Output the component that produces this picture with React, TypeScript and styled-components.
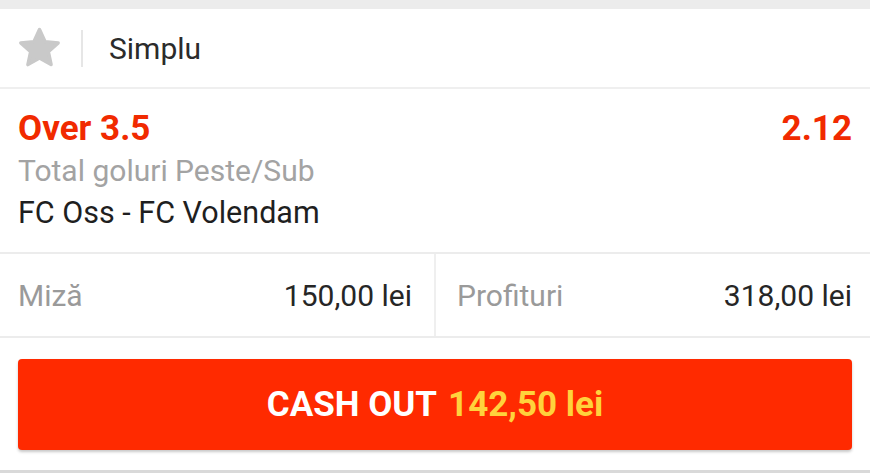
import React from "react";
import styled, { createGlobalStyle } from "styled-components";

const Global = createGlobalStyle`
  html, body { margin: 0; padding: 0; background: #ffffff; }
  body { font-family: Roboto, "Liberation Sans", Arial, sans-serif; -webkit-font-smoothing: antialiased; }
`;

const Page = styled.div`
  width: 870px;
  height: 473px;
  display: flex;
  flex-direction: column;
  background: #ffffff;
  overflow: hidden;
`;

const Band = styled.div<{ $h: number; $c: string }>`
  height: ${(p) => p.$h}px;
  background: ${(p) => p.$c};
  flex: none;
`;

const Header = styled.div`
  height: 78px;
  display: flex;
  align-items: center;
  padding-left: 18px;
  flex: none;
`;

const StarIcon = styled.svg`
  width: 43px;
  height: 43px;
  flex: none;
`;

const VDivider = styled.div`
  width: 2px;
  height: 37px;
  background: #e6e6e6;
  margin: 0 26px 0 20px;
`;

const HeaderTitle = styled.span`
  font-size: 30px;
  color: #2b2b2b;
`;

const Selection = styled.div`
  padding: 19px 18px 20px;
  display: flex;
  flex-direction: column;
  flex: none;
`;

const Line = styled.div<{ $h: number }>`
  height: ${(p) => p.$h}px;
  display: flex;
  align-items: center;
  justify-content: space-between;
`;

const Pick = styled.span`
  font-size: 35px;
  font-weight: 700;
  color: #f12a00;
`;

const Odds = styled.span`
  font-size: 35px;
  font-weight: 700;
  color: #f12a00;
`;

const Market = styled.span`
  font-size: 30px;
  color: #a3a3a3;
`;

const Event = styled.span`
  font-size: 30.5px;
  color: #1f1f1f;
`;

const StakeRow = styled.div`
  height: 82px;
  display: grid;
  grid-template-columns: 434px 2px 1fr;
  flex: none;
`;

const StakeCell = styled.div<{ $pl: number; $pr: number }>`
  display: flex;
  align-items: center;
  justify-content: space-between;
  padding: 0 ${(p) => p.$pr}px 0 ${(p) => p.$pl}px;
`;

const CellDivider = styled.div`
  background: #efefef;
`;

const Label = styled.span`
  font-size: 30px;
  color: #9a9a9a;
`;

const Value = styled.span`
  font-size: 30px;
  color: #262626;
`;

const ButtonWrap = styled.div`
  padding: 21px 18px 20px;
  flex: none;
`;

const CashOut = styled.button`
  width: 100%;
  height: 91px;
  border: none;
  border-radius: 4px;
  background: #ff2a00;
  box-shadow: 0 2px 3px rgba(0, 0, 0, 0.22);
  display: flex;
  align-items: center;
  justify-content: center;
  gap: 11px;
  font-family: Roboto, "Liberation Sans", Arial, sans-serif;
  font-size: 35px;
  font-weight: 700;
  color: #ffffff;
  padding: 0;
`;

const Amount = styled.span`
  color: #ffd23c;
`;

export default function App() {
  return (
    <Page>
      <Global />
      <Band $h={9} $c="#ececec" />
      <Header>
        <StarIcon viewBox="2 2 20 20">
          <path
            d="M12 3.2l2.6 5.6 6.1.6-4.6 4.1 1.3 6-5.4-3.1-5.4 3.1 1.3-6-4.6-4.1 6.1-.6z"
            fill="#c9c9c9"
            stroke="#c9c9c9"
            strokeWidth="1.6"
            strokeLinejoin="round"
          />
        </StarIcon>
        <VDivider />
        <HeaderTitle>Simplu</HeaderTitle>
      </Header>
      <Band $h={2} $c="#efefef" />
      <Selection>
        <Line $h={40}>
          <Pick>Over 3.5</Pick>
          <Odds>2.12</Odds>
        </Line>
        <Line $h={44}>
          <Market>Total goluri Peste/Sub</Market>
        </Line>
        <Line $h={40}>
          <Event>FC Oss - FC Volendam</Event>
        </Line>
      </Selection>
      <Band $h={2} $c="#ececec" />
      <StakeRow>
        <StakeCell $pl={18} $pr={22}>
          <Label>Miză</Label>
          <Value>150,00 lei</Value>
        </StakeCell>
        <CellDivider />
        <StakeCell $pl={21} $pr={18}>
          <Label>Profituri</Label>
          <Value>318,00 lei</Value>
        </StakeCell>
      </StakeRow>
      <Band $h={2} $c="#ececec" />
      <ButtonWrap>
        <CashOut>
          <span>CASH OUT</span>
          <Amount>142,50 lei</Amount>
        </CashOut>
      </ButtonWrap>
      <Band $h={3} $c="#d9d9d9" />
    </Page>
  );
}
